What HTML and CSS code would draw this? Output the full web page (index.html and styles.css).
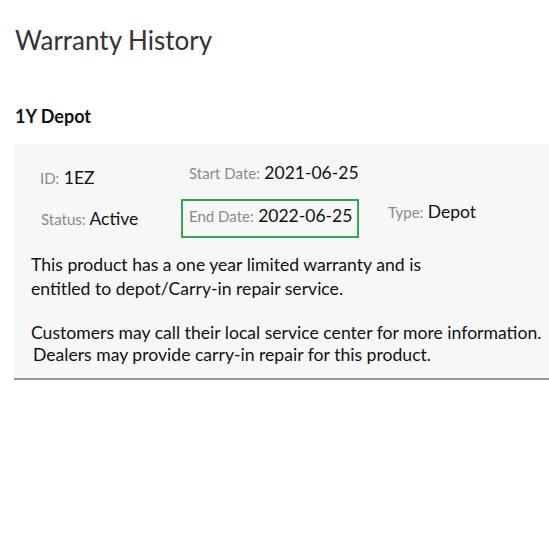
FILE: index.html
```html
<!DOCTYPE html>
<html lang="en">
<head>
  <meta charset="UTF-8">
  <title>Warranty History</title>
  <link rel="stylesheet" href="styles.css">
</head>
<body>

<h1 class="page-title">Warranty History</h1>

<h2 class="plan-name">1Y Depot</h2>

<div class="plan-card">
  <div class="fields">
    <div class="field field-id"><span class="label">ID:</span> 1EZ</div>
    <div class="field field-start"><span class="label">Start Date:</span> 2021-06-25</div>
    <div class="field-empty"></div>
    <div class="field field-status"><span class="label">Status:</span> Active</div>
    <div class="field field-end"><span class="label">End Date:</span> 2022-06-25</div>
    <div class="field field-type"><span class="label">Type:</span> Depot</div>
  </div>

  <p class="desc">This product has a one year limited warranty and is<br>entitled to depot/Carry-in repair service.</p>
  <p class="desc desc-second">Customers may call their local service center for more information.<br><span class="shift">Dealers may provide carry-in repair for this product.</span></p>
</div>

</body>
</html>
```

FILE: styles.css
```css
body {
  font-family: Lato, 'Open Sans', sans-serif;
  background: #fff;
  color: #111;
  margin: 0;
  padding: 0;
}
.page-title {
  font-size: 26px;
  font-weight: 400;
  color: #333;
  margin: 0;
  padding: 24px 0 0 15px;
  line-height: 32px;
}
.plan-name {
  font-size: 18px;
  font-weight: 700;
  color: #111;
  margin: 0;
  padding: 48px 0 0 15px;
  line-height: 24px;
}
.plan-card {
  background: #f7f7f7;
  margin: 16px 0 0 14px;
  padding: 12px 0 12px 0;
  border-bottom: 2px solid #999;
}
.fields {
  display: grid;
  grid-template-columns: 167px 178px 1fr;
  row-gap: 9px;
  font-size: 17.5px;
  color: #111;
  white-space: nowrap;
}
.field {
  line-height: 24px;
}
.label {
  font-size: 15px;
  color: #8a8a8a;
}
.field-id {
  padding: 10px 0 0 26px;
}
.field-start {
  padding: 5px 0 0 8px;
}
.field-status {
  padding: 8px 0 0 27px;
}
.field-end {
  border: 2px solid #2ea84a;
  padding: 3px 0 8px 6px;
}
.field-type {
  padding: 1px 0 0 29px;
}
.desc {
  font-size: 17.6px;
  line-height: 24px;
  margin: 15px 0 0 17px;
}
.desc-second {
  margin-top: 21px;
  line-height: 22px;
}
.shift {
  padding-left: 2px;
}
```
